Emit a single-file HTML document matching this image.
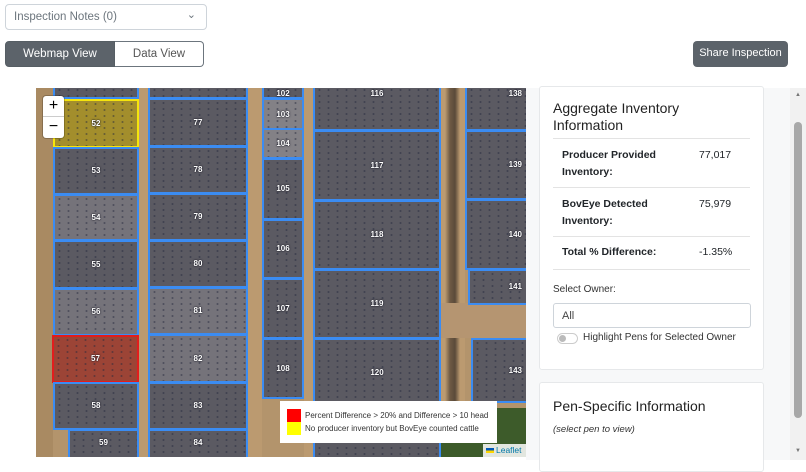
<!DOCTYPE html>
<html><head><meta charset="utf-8"><style>
*{box-sizing:border-box;margin:0;padding:0}
body{width:806px;height:460px;overflow:hidden;background:#fff;font-family:"Liberation Sans",sans-serif;color:#212529;position:relative}
.abs{position:absolute}
.sel{left:5px;top:4px;width:202px;height:26px;border:1px solid #ced4da;border-radius:4px;font-size:11.5px;color:#6c757d;padding:6px 8px}
.btn{top:41px;height:26px;font-size:11.5px;text-align:center;line-height:24px}
#map{left:36px;top:88px;width:490px;height:369px;overflow:hidden;background:#b3946c}
.road{position:absolute;background:#bb9a70}
.pen{position:absolute;border:2px solid #3b8cf2;background:#5b5a62;background-image:radial-gradient(rgba(35,40,60,.7) 0.8px,transparent 1.3px);background-size:9px 6px}
.pen span{position:absolute;left:0;right:0;top:50%;margin-top:-5px;text-align:center;color:#fff;font-size:8px;font-weight:bold;text-shadow:0 0 2px #223,0 0 1px #000}
.lt{background-color:#75737a}
.panel{left:526px;top:88px;width:264px;height:372px;background:#f7f8f9}
.card{position:absolute;left:13px;width:225px;background:#fff;border:1px solid #e6e8ea;border-radius:3px}
.row{position:absolute;left:13px;width:197px;border-top:1px solid #e3e3e3;font-size:10.5px}
.row b{position:absolute;left:9px;line-height:17px}
.row i{position:absolute;left:146px;font-style:normal;line-height:17px}
</style></head><body>
<div class="abs sel">Inspection Notes (0)<span style="position:absolute;right:10px;top:3px;font-size:11px">&#8964;</span></div>
<div class="abs btn" style="left:5px;width:110px;background:#5c636a;color:#fff;border-radius:4px 0 0 4px;border:1px solid #565e64">Webmap View</div>
<div class="abs btn" style="left:115px;width:89px;border:1px solid #6c757d;border-left:0;border-radius:0 4px 4px 0;color:#555">Data View</div>
<div class="abs btn" style="left:693px;width:95px;background:#5c636a;color:#fff;border-radius:4px;font-size:11px">Share Inspection</div>

<div id="map" class="abs">
<div class="road" style="left:0;top:0;width:17px;height:369px;background:#a98a62"></div>
<div class="road" style="left:102px;top:0;width:10px;height:369px"></div>
<div class="road" style="left:212px;top:0;width:14px;height:369px"></div>
<div class="road" style="left:268px;top:0;width:9px;height:369px"></div>
<div class="road" style="left:404px;top:0;width:25px;height:369px;background:linear-gradient(90deg,#bb9a70 20%,#6e5a44 40%,#5a4a3a 60%,#bb9a70 80%)"></div>
<div class="road" style="left:404px;top:215px;width:86px;height:35px;background:#b59571"></div>
<div class="road" style="left:404px;top:320px;width:86px;height:49px;background:#3d5b2a"></div>
<div class="pen" style="left:17px;top:-3px;width:86px;height:14px"></div>
<div class="pen" style="left:17px;top:11px;width:86px;height:49px;border-color:#f5e50c;background-color:#a38e2c"><span>52</span></div>
<div class="pen" style="left:17px;top:59px;width:86px;height:48px"><span>53</span></div>
<div class="pen lt" style="left:17px;top:106px;width:86px;height:47px"><span>54</span></div>
<div class="pen" style="left:17px;top:152px;width:86px;height:49px"><span>55</span></div>
<div class="pen lt" style="left:17px;top:200px;width:86px;height:48px"><span>56</span></div>
<div class="pen" style="left:16px;top:247px;width:87px;height:48px;border-color:#e21d1d;background-color:#9c4436"><span>57</span></div>
<div class="pen" style="left:17px;top:294px;width:86px;height:48px"><span>58</span></div>
<div class="pen" style="left:32px;top:341px;width:71px;height:40px"><span style="top:auto;bottom:20px">59</span></div>
<div class="pen" style="left:112px;top:-3px;width:100px;height:14px"></div>
<div class="pen" style="left:112px;top:10px;width:100px;height:49px"><span>77</span></div>
<div class="pen" style="left:112px;top:58px;width:100px;height:48px"><span>78</span></div>
<div class="pen" style="left:112px;top:105px;width:100px;height:48px"><span>79</span></div>
<div class="pen" style="left:112px;top:152px;width:100px;height:48px"><span>80</span></div>
<div class="pen lt" style="left:112px;top:199px;width:100px;height:48px"><span>81</span></div>
<div class="pen lt" style="left:112px;top:246px;width:100px;height:49px"><span>82</span></div>
<div class="pen" style="left:112px;top:294px;width:100px;height:48px"><span>83</span></div>
<div class="pen" style="left:112px;top:341px;width:100px;height:40px"><span style="top:auto;bottom:20px">84</span></div>
<div class="pen" style="left:226px;top:-3px;width:42px;height:14px"><span style="margin-top:-3px">102</span></div>
<div class="pen lt" style="left:226px;top:10px;width:42px;height:33px;background-color:#838186"><span>103</span></div>
<div class="pen lt" style="left:226px;top:40px;width:42px;height:31px;background-color:#838186"><span>104</span></div>
<div class="pen" style="left:226px;top:70px;width:42px;height:62px"><span>105</span></div>
<div class="pen" style="left:226px;top:131px;width:42px;height:60px"><span>106</span></div>
<div class="pen" style="left:226px;top:190px;width:42px;height:61px"><span>107</span></div>
<div class="pen" style="left:226px;top:250px;width:42px;height:61px"><span>108</span></div>
<div class="pen" style="left:277px;top:-3px;width:128px;height:46px"><span style="top:0;margin-top:2px">116</span></div>
<div class="pen" style="left:277px;top:42px;width:128px;height:71px"><span>117</span></div>
<div class="pen" style="left:277px;top:112px;width:128px;height:70px"><span>118</span></div>
<div class="pen" style="left:277px;top:181px;width:128px;height:70px"><span>119</span></div>
<div class="pen" style="left:277px;top:250px;width:128px;height:70px"><span>120</span></div>
<div class="pen" style="left:277px;top:319px;width:128px;height:60px"></div>
<div class="pen" style="left:429px;top:-3px;width:65px;height:46px"><span style="top:0;margin-top:2px;text-align:right;padding-right:6px">138</span></div>
<div class="pen" style="left:429px;top:42px;width:65px;height:70px"><span style="text-align:right;padding-right:6px">139</span></div>
<div class="pen" style="left:429px;top:111px;width:65px;height:71px"><span style="text-align:right;padding-right:6px">140</span></div>
<div class="pen" style="left:432px;top:181px;width:62px;height:36px"><span style="text-align:right;padding-right:6px">141</span></div>
<div class="pen" style="left:435px;top:250px;width:59px;height:65px"><span style="text-align:right;padding-right:6px">143</span></div>
<div class="abs" style="left:7px;top:8px;width:21px;height:42px;background:#fff;border-radius:3px;box-shadow:0 0 0 1px rgba(0,0,0,.2);font-size:16px;text-align:center;line-height:20px;color:#000">+<div style="border-top:1px solid #ccc">&minus;</div></div>
<div class="abs" style="left:244px;top:313px;width:217px;height:42px;background:#fff;font-size:8px;color:#333">
<div class="abs" style="left:7px;top:8px;width:14px;height:13px;background:#f00"></div>
<div class="abs" style="left:7px;top:21px;width:14px;height:13px;background:#ff0"></div>
<div class="abs" style="left:25px;top:10px;white-space:nowrap">Percent Difference &gt; 20% and Difference &gt; 10 head</div>
<div class="abs" style="left:25px;top:23px;white-space:nowrap">No producer inventory but BovEye counted cattle</div>
</div>
<div class="abs" style="left:447px;top:356px;width:43px;height:13px;background:rgba(255,255,255,.85);font-size:8.5px;color:#0078a8;padding:1px 3px"><span style="display:inline-block;width:8px;height:5px;background:linear-gradient(#0057b7 50%,#ffd700 50%);margin-right:2px"></span>Leaflet</div>
</div>

<div class="abs panel">
<div class="card" style="top:-2px;height:284px">
<div class="abs" style="left:13px;top:13px;font-size:14px;line-height:17px;color:#222">Aggregate Inventory<br>Information</div>
<div class="row" style="top:51px;height:49px"><b style="top:8px">Producer Provided<br>Inventory:</b><i style="top:8px">77,017</i></div>
<div class="row" style="top:100px;height:49px"><b style="top:8px">BovEye Detected<br>Inventory:</b><i style="top:8px">75,979</i></div>
<div class="row" style="top:149px;height:33px"><b style="top:7px">Total % Difference:</b><i style="top:7px">-1.35%</i></div>
<div class="row" style="top:182px;height:1px"></div>
<div class="abs" style="left:13px;top:197px;font-size:10px;color:#333">Select Owner:</div>
<div class="abs" style="left:13px;top:216px;width:198px;height:25px;border:1px solid #ced4da;border-radius:3px;font-size:11px;padding:6px 8px;color:#444">All</div>
<div class="abs" style="left:17px;top:246px;width:21px;height:11px;border:1px solid #ccc;border-radius:6px"><div style="margin:1px;width:7px;height:7px;border-radius:50%;background:#bbb"></div></div>
<div class="abs" style="left:43px;top:245px;font-size:10px;color:#333;white-space:nowrap">Highlight Pens for Selected Owner</div>
</div>
<div class="card" style="top:294px;height:90px">
<div class="abs" style="left:13px;top:15px;font-size:14px;color:#222">Pen-Specific Information</div>
<div class="abs" style="left:13px;top:41px;font-size:9.5px;font-style:italic;color:#333">(select pen to view)</div>
</div>
</div>
<div class="abs" style="left:790px;top:88px;width:16px;height:372px;background:#f1f1f1">
<div class="abs" style="left:4px;top:34px;width:8px;height:296px;background:#a8a8a8;border-radius:4px"></div>
<div class="abs" style="left:5px;top:4px;font-size:6px;color:#777">&#9650;</div>
<div class="abs" style="left:5px;top:360px;font-size:6px;color:#777">&#9660;</div>
</div>
</body></html>
